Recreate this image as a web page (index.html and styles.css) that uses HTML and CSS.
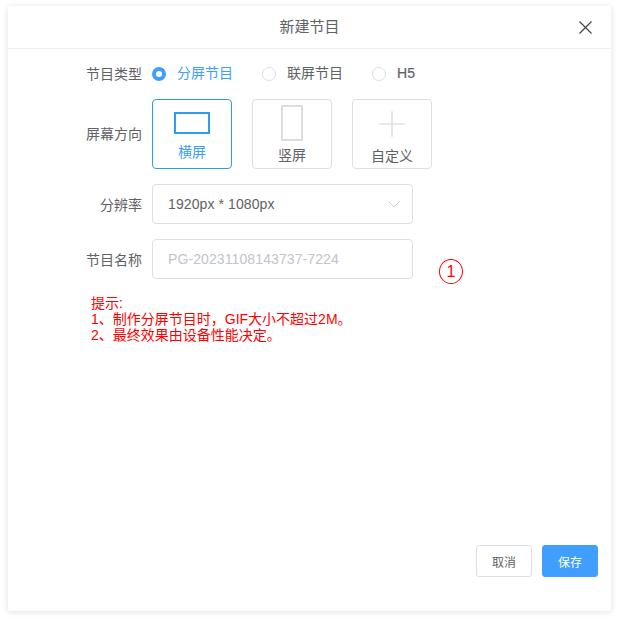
FILE: index.html
```html
<!DOCTYPE html>
<html lang="zh">
<head>
<meta charset="utf-8">
<title>新建节目</title>
<link rel="stylesheet" href="styles.css">
</head>
<body>
<div class="dialog">
  <header class="head">
    <span class="title">新建节目</span>
    <svg class="close" width="13" height="13" viewBox="0 0 13 13"><path d="M.5.5l12 12M12.5.5l-12 12" stroke="#444" stroke-width="1.2" fill="none"/></svg>
  </header>
  <div class="body">
    <div class="row row-type">
      <span class="label raised">节目类型</span>
      <div class="radios">
        <span class="radio on"><i class="dot"></i>分屏节目</span>
        <span class="radio"><i class="dot"></i>联屏节目</span>
        <span class="radio h5"><i class="dot"></i>H5</span>
      </div>
    </div>
    <div class="row row-dir">
      <span class="label raised">屏幕方向</span>
      <div class="cards">
        <div class="card on"><i class="shape wide"></i><span>横屏</span></div>
        <div class="card"><i class="shape tall"></i><span>竖屏</span></div>
        <div class="card">
          <svg class="plus" width="26" height="26" viewBox="0 0 26 26"><path d="M13 0v26M0 13h26" stroke="#e2e2e2" stroke-width="1.6" fill="none"/></svg>
          <span>自定义</span>
        </div>
      </div>
    </div>
    <div class="row row-res">
      <span class="label">分辨率</span>
      <div class="field select">
        <span>1920px * 1080px</span>
        <svg width="12" height="7" viewBox="0 0 12 7"><path d="M.8.8L6 6l5.2-5.2" stroke="#c9ccd4" stroke-width="1" fill="none"/></svg>
      </div>
    </div>
    <div class="row row-name">
      <span class="label">节目名称</span>
      <div class="field placeholder">PG-20231108143737-7224</div>
      <span class="marker">1</span>
    </div>
    <div class="hint">提示:<br>1、制作分屏节目时，GIF大小不超过2M。<br>2、最终效果由设备性能决定。</div>
  </div>
  <footer class="foot">
    <button class="btn">取消</button>
    <button class="btn primary">保存</button>
  </footer>
</div>
</body>
</html>
```
FILE: styles.css
```css
* { box-sizing: border-box; }
html, body { margin: 0; height: 100%; }
body {
  background: #fff;
  padding: 6px 8px 10px;
  font-family: "Liberation Sans", "Noto Sans CJK SC", sans-serif;
  font-size: 14px;
  color: #606266;
  overflow: hidden;
}
.dialog {
  width: 603px;
  height: 605px;
  background: #fff;
  box-shadow: 0 1px 6px rgba(0, 0, 0, .13);
  display: flex;
  flex-direction: column;
}
.head {
  height: 43px;
  flex: none;
  border-bottom: 1px solid #ebeef5;
  display: flex;
  align-items: center;
  justify-content: center;
  position: relative;
}
.title { font-size: 15px; line-height: 20px; color: #606266; margin-top: -1px; }
.close { position: absolute; right: 19px; top: 15px; }
.body { flex: 1; position: relative; padding-top: 15px; }
.row { display: flex; align-items: center; }
.label {
  width: 134px;
  text-align: right;
  flex: none;
  margin-right: 10px;
  color: #606266;
}
.label.raised { margin-top: -2px; }
.row-type { height: 20px; }
.radios { display: flex; }
.radio { display: flex; align-items: center; width: 110px; color: #606266; line-height: 20px; margin-top: -2px; }
.radio.on { color: #409eff; }
.radio.h5 { letter-spacing: .2px; -webkit-text-stroke: .2px #606266; }
.dot {
  width: 14px; height: 14px; border-radius: 50%;
  border: 1px solid #dcdfe6;
  margin: 2px 11px 0 0;
  background: #fff;
  flex: none;
}
.radio.on .dot { border: 4px solid #409eff; box-shadow: inset 0 0 0 2px #fff; background: #fff; }
.row-dir { margin-top: 15px; }
.cards { display: flex; gap: 20px; }
.card {
  width: 80px;
  height: 70px;
  border: 1px solid #dcdfe6;
  border-radius: 4px;
  display: flex;
  flex-direction: column;
  align-items: center;
  color: #606266;
  line-height: 20px;
  padding-top: 5px;
}
.card.on { border-color: #2a9df4; color: #409eff; }
.shape { display: block; border: 2px solid #ddd; }
.shape.wide { width: 36px; height: 22px; border-color: #2a9df4; margin: 7px 0 8px; }
.shape.tall { width: 22px; height: 36px; margin: 0 0 4px; }
.plus { margin: 6px 0 9px; flex: none; }
.row-res { margin-top: 15px; }
.field {
  width: 261px;
  height: 40px;
  border: 1px solid #dcdfe6;
  border-radius: 4px;
  padding: 0 15px;
  display: flex;
  align-items: center;
  letter-spacing: .1px;
}
.select { justify-content: space-between; padding-right: 12px; color: #606266; }
.placeholder { color: #c0c4cc; }
.row-name { margin-top: 15px; position: relative; }
.marker {
  position: absolute;
  left: 431px;
  top: 20px;
  width: 24px;
  height: 25px;
  border: 1px solid #f00;
  border-radius: 50%;
  color: #f00;
  font-size: 16px;
  line-height: 23px;
  text-align: center;
}
.hint {
  margin: 16px 0 0 83px;
  color: #f00;
  font-size: 14px;
  line-height: 16px;
}
.foot {
  flex: none;
  display: flex;
  justify-content: flex-end;
  gap: 10px;
  padding: 0 13px 34px;
}
.btn {
  width: 56px;
  height: 32px;
  border: 1px solid #dcdfe6;
  border-radius: 3px;
  background: #fff;
  color: #606266;
  font: 12px "Liberation Sans", "Noto Sans CJK SC", sans-serif;
  padding: 0;
}
.btn.primary { background: #409eff; border-color: #409eff; color: #fff; }
```
